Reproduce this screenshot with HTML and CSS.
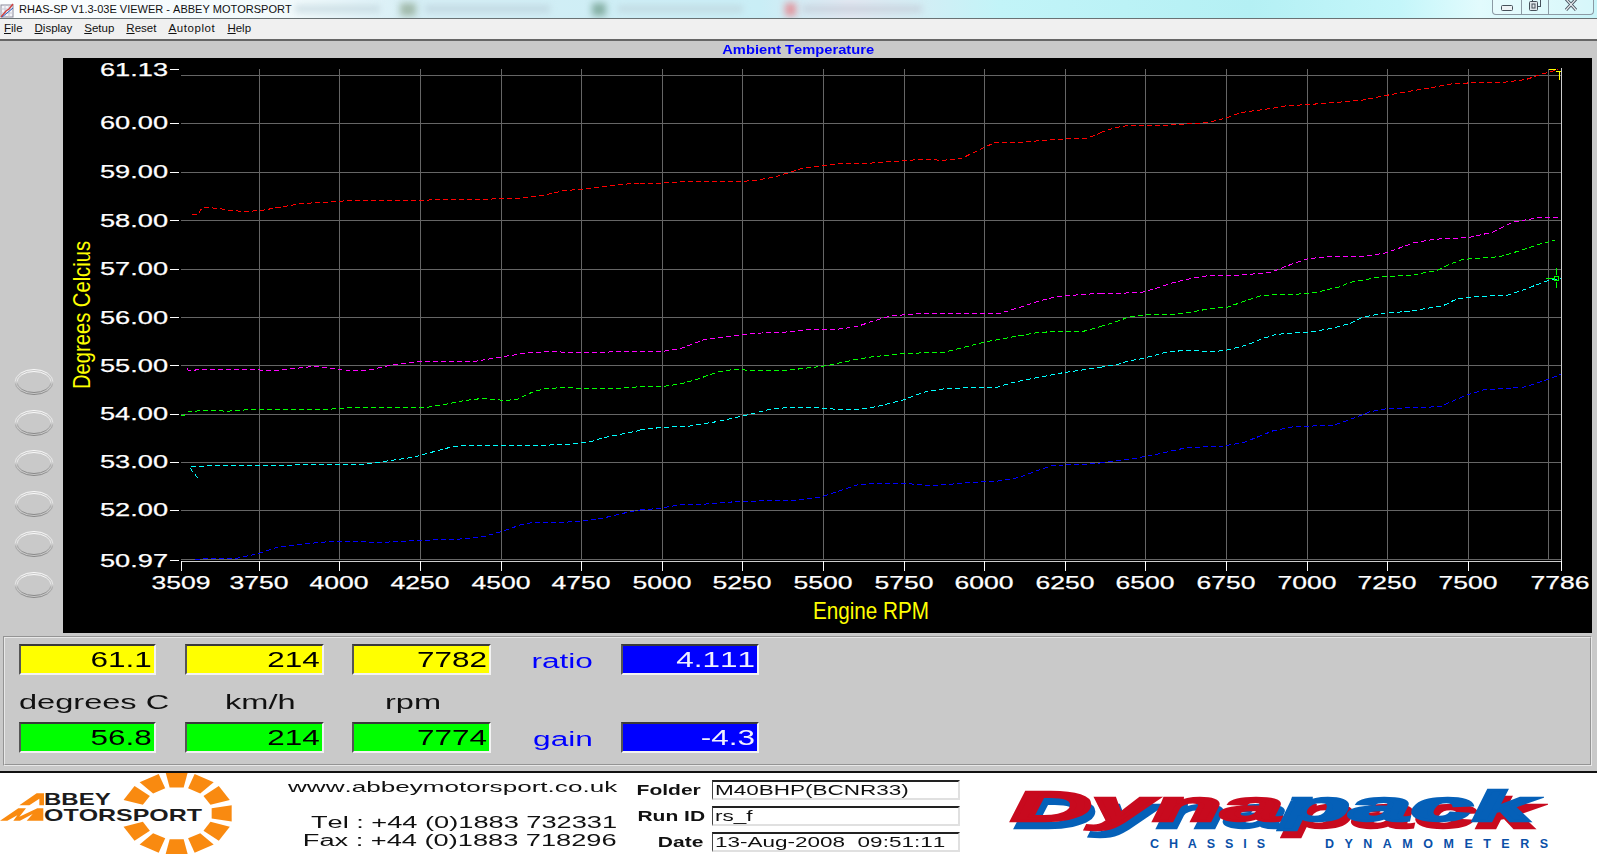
FILE: index.html
```html
<!DOCTYPE html>
<html lang="en">
<head>
<meta charset="utf-8">
<title>RHAS-SP V1.3-03E VIEWER - ABBEY MOTORSPORT</title>
<link rel="stylesheet" href="styles.css">
</head>
<body>
<header class="titlebar">
  <svg class="appicon" width="14" height="15" viewBox="0 0 14 15"><rect x="1" y="2" width="12" height="12" fill="#f4f4f8" stroke="#8a8a9a"/><path d="M1 6h12M1 10h12M5 2v12M9 2v12" stroke="#c8c8d4" fill="none"/><path d="M1 14L6 8l3-2 4-5" stroke="#d04040" stroke-width="1.4" fill="none"/><path d="M2 14l5-4 6-5" stroke="#3060c0" fill="none"/></svg>
  <span class="apptitle">RHAS-SP V1.3-03E VIEWER - ABBEY MOTORSPORT</span>
  <i class="blur b1"></i><i class="blur b2"></i><i class="blur b3"></i><i class="blur b4"></i><i class="blur b5"></i><i class="blur b6"></i><i class="blur b7"></i>
  <div class="winbtns">
    <div class="winbtn bmin"><svg width="12" height="6" viewBox="0 0 12 6"><rect x="0.5" y="0.5" width="11" height="5" rx="1" fill="#eef2f5" stroke="#46505a"/></svg></div>
    <div class="winbtn bmax"><svg width="12" height="12" viewBox="0 0 12 12"><rect x="3.5" y="-2.5" width="8" height="9" fill="none" stroke="#46505a"/><rect x="0.5" y="1.5" width="8" height="9" rx="1" fill="#dfe6ea" stroke="#46505a"/><rect x="3" y="4" width="3" height="4" fill="none" stroke="#46505a"/></svg></div>
    <div class="winbtn bclose"><svg width="12" height="11" viewBox="0 0 12 11"><path d="M1-1L11 10M11-1L1 10" stroke="#4a5560" stroke-width="3" fill="none"/><path d="M1-1L11 10M11-1L1 10" stroke="#e8edf0" stroke-width="1.2" fill="none"/></svg></div>
  </div>
</header>
<nav class="menubar">
  <span><u>F</u>ile</span><span><u>D</u>isplay</span><span><u>S</u>etup</span><span><u>R</u>eset</span><span class="autoplot"><u>A</u>utoplot</span><span><u>H</u>elp</span>
</nav>
<main class="main">
  <div class="charttitle"><span>Ambient Temperature</span></div>
  <div class="chartrow">
    <div class="radios">
      <svg class="radio" viewBox="0 0 40 26"><use href="#ring"/></svg>
      <svg class="radio" viewBox="0 0 40 26"><use href="#ring"/></svg>
      <svg class="radio" viewBox="0 0 40 26"><use href="#ring"/></svg>
      <svg class="radio" viewBox="0 0 40 26"><use href="#ring"/></svg>
      <svg class="radio" viewBox="0 0 40 26"><use href="#ring"/></svg>
      <svg class="radio" viewBox="0 0 40 26"><use href="#ring"/></svg>
    </div>
    <svg class="chart" width="1529" height="575" viewBox="63 58 1529 575">
      <defs>
        <linearGradient id="ringgrad" x1="0" y1="0" x2="0" y2="1"><stop offset="0" stop-color="#fff"/><stop offset="0.45" stop-color="#e8e8e8"/><stop offset="0.6" stop-color="#a8a8a8"/><stop offset="1" stop-color="#808080"/></linearGradient>
        <g id="ring"><ellipse cx="20" cy="13" rx="19" ry="12.5" fill="none" stroke="url(#ringgrad)" stroke-width=".9"/><ellipse cx="20" cy="13" rx="17" ry="10.5" fill="none" stroke="url(#ringgrad)" stroke-width=".9"/></g>
      </defs>
      <path class="grid" d="M259.5 69V559M339.5 69V559M420.5 69V559M501.5 69V559M581.5 69V559M662.5 69V559M742.5 69V559M823.5 69V559M904.5 69V559M984.5 69V559M1065.5 69V559M1145.5 69V559M1226.5 69V559M1307.5 69V559M1387.5 69V559M1468.5 69V559M1548.5 69V559M181 75.5H1561M181 123.5H1561M181 172.5H1561M181 220.5H1561M181 269.5H1561M181 317.5H1561M181 365.5H1561M181 414.5H1561M181 462.5H1561M181 510.5H1561M181 559.5H1561"/>
      <path class="axis" d="M1561.5 68V561M181 561.5H1562"/>
      <path class="ticks" d="M170 69.5H179M170 123.5H179M170 172.5H179M170 220.5H179M170 269.5H179M170 317.5H179M170 365.5H179M170 414.5H179M170 462.5H179M170 510.5H179M170 560.5H179M181.5 561V571M259.5 561V571M339.5 561V571M420.5 561V571M501.5 561V571M581.5 561V571M662.5 561V571M742.5 561V571M823.5 561V571M904.5 561V571M984.5 561V571M1065.5 561V571M1145.5 561V571M1226.5 561V571M1307.5 561V571M1387.5 561V571M1468.5 561V571M1561.5 561V571"/>

      <g transform="translate(170 170) scale(.33333)">
        <polyline class="tr red" points="65,133 85,133 95,115 110,112 150,116 175,120 225,125 275,121 340,110 400,100 470,97 530,92 690,92 780,90 1030,86 1070,83 1130,74 1180,62 1230,58 1320,48 1380,41 1410,40"/>
        <polyline class="tr mag" points="52,595 55,601 100,599 230,598 310,602 380,595 430,589 490,596 535,603 590,602 640,590 690,581 745,575 910,575 1000,560 1050,552 1090,547 1160,544 1180,547 1310,547 1330,544 1410,544"/>
        <polyline class="tr grn" points="33,735 40,738 55,726 100,721 140,721 170,724 205,721 260,718 480,718 500,715 560,713 770,712 820,704 880,692 940,685 1000,691 1040,689 1090,665 1125,656 1190,652 1240,656 1350,655 1410,650"/>
        <polyline class="tr cyn" points="85,925 75,914 65,902 60,889 105,888 230,886 375,885 580,883 650,873 730,862 780,848 840,832 890,826 1080,828 1140,825 1210,822 1270,813 1300,803 1350,793 1410,781"/>
        <polyline class="tr blu" points="75,1170 110,1165 200,1165 260,1152 320,1132 380,1125 450,1117 500,1114 640,1117 750,1111 860,1108 940,1100 1000,1083 1050,1065 1090,1057 1180,1057 1240,1053 1300,1044 1350,1032 1400,1021 1410,1020"/>
      </g>
      <g transform="translate(640 130) scale(.33333)">
        <polyline class="tr red" points="0,160 70,159 130,155 300,155 350,150 400,142 440,130 490,114 550,107 610,100 700,99 790,92 850,88 910,91 965,85 1000,68 1030,53 1065,38 1140,37 1200,32 1240,28 1340,25 1380,10"/>
        <polyline class="tr mag" points="0,664 70,664 120,656 150,645 190,630 260,620 340,610 440,606 500,599 590,598 650,590 700,573 750,558 850,550 1080,550 1130,535 1200,512 1250,500 1320,494 1380,490"/>
        <polyline class="tr grn" points="0,769 70,769 120,762 165,750 230,727 280,718 350,722 440,721 520,712 560,707 640,690 700,680 800,670 910,667 980,650 1040,635 1100,624 1190,608 1250,604 1330,604 1380,590"/>
        <polyline class="tr cyn" points="0,899 60,893 150,888 230,875 300,860 360,845 390,838 450,832 530,833 590,838 650,838 710,830 790,810 850,787 920,775 1070,772 1120,757 1180,745 1270,728 1380,712"/>
        <polyline class="tr blu" points="0,1140 60,1135 120,1124 200,1122 300,1114 460,1111 540,1102 600,1082 650,1065 700,1060 790,1060 880,1067 1000,1057 1075,1053 1140,1042 1190,1022 1240,1006 1330,1003 1380,999"/>
      </g>
      <g transform="translate(1100 60) scale(.33333)">
        <polyline class="tr red" points="0,218 30,208 60,200 90,196 190,196 260,192 320,188 355,180 385,172 420,158 510,146 560,137 620,134 700,128 790,120 860,106 940,92 1010,80 1065,70 1220,66 1280,58 1320,44 1375,28"/>
        <polyline class="tr mag" points="0,700 60,700 130,696 170,684 230,665 280,654 330,646 420,645 510,638 560,618 620,597 680,590 790,590 860,578 940,549 1000,538 1110,532 1180,516 1240,486 1300,476 1320,472 1375,472"/>
        <polyline class="tr grn" points="0,800 40,788 90,770 130,765 220,763 280,755 330,746 380,742 430,725 480,708 520,704 600,702 650,697 720,680 750,667 840,651 930,646 1010,632 1050,612 1090,598 1200,590 1260,572 1320,552 1365,541"/>
        <polyline class="tr cyn" points="0,922 50,914 80,904 130,895 200,876 260,871 340,875 380,870 440,855 490,835 530,823 640,815 700,804 750,790 790,771 860,758 920,755 980,745 1030,737 1070,717 1140,709 1220,706 1280,686 1340,663 1384,655"/>
        <polyline class="tr blu" points="0,1209 95,1197 160,1185 260,1163 370,1158 430,1148 520,1112 580,1100 700,1096 760,1075 810,1055 860,1046 1020,1040 1100,1005 1150,990 1270,982 1330,963 1384,943"/>
      </g>

      <path class="cur-y" d="M1549 69.5H1556M1556 71.5H1561M1559.5 71V80"/>
      <path class="cur-g" d="M1546 278.5H1554M1556.5 268V275M1556.5 282V288"/>
      <rect class="cur-g" x="1554.5" y="276.5" width="4" height="4"/>

      <g class="ylab">
        <text x="100" y="76" textLength="68" lengthAdjust="spacingAndGlyphs">61.13</text>
        <text x="100" y="129" textLength="68" lengthAdjust="spacingAndGlyphs">60.00</text>
        <text x="100" y="178" textLength="68" lengthAdjust="spacingAndGlyphs">59.00</text>
        <text x="100" y="227" textLength="68" lengthAdjust="spacingAndGlyphs">58.00</text>
        <text x="100" y="275" textLength="68" lengthAdjust="spacingAndGlyphs">57.00</text>
        <text x="100" y="324" textLength="68" lengthAdjust="spacingAndGlyphs">56.00</text>
        <text x="100" y="372" textLength="68" lengthAdjust="spacingAndGlyphs">55.00</text>
        <text x="100" y="420" textLength="68" lengthAdjust="spacingAndGlyphs">54.00</text>
        <text x="100" y="468" textLength="68" lengthAdjust="spacingAndGlyphs">53.00</text>
        <text x="100" y="516" textLength="68" lengthAdjust="spacingAndGlyphs">52.00</text>
        <text x="100" y="567" textLength="68" lengthAdjust="spacingAndGlyphs">50.97</text>
      </g>
      <g class="xlab">
        <text x="181" y="589" textLength="59" lengthAdjust="spacingAndGlyphs">3509</text>
        <text x="259" y="589" textLength="59" lengthAdjust="spacingAndGlyphs">3750</text>
        <text x="339" y="589" textLength="59" lengthAdjust="spacingAndGlyphs">4000</text>
        <text x="420" y="589" textLength="59" lengthAdjust="spacingAndGlyphs">4250</text>
        <text x="501" y="589" textLength="59" lengthAdjust="spacingAndGlyphs">4500</text>
        <text x="581" y="589" textLength="59" lengthAdjust="spacingAndGlyphs">4750</text>
        <text x="662" y="589" textLength="59" lengthAdjust="spacingAndGlyphs">5000</text>
        <text x="742" y="589" textLength="59" lengthAdjust="spacingAndGlyphs">5250</text>
        <text x="823" y="589" textLength="59" lengthAdjust="spacingAndGlyphs">5500</text>
        <text x="904" y="589" textLength="59" lengthAdjust="spacingAndGlyphs">5750</text>
        <text x="984" y="589" textLength="59" lengthAdjust="spacingAndGlyphs">6000</text>
        <text x="1065" y="589" textLength="59" lengthAdjust="spacingAndGlyphs">6250</text>
        <text x="1145" y="589" textLength="59" lengthAdjust="spacingAndGlyphs">6500</text>
        <text x="1226" y="589" textLength="59" lengthAdjust="spacingAndGlyphs">6750</text>
        <text x="1307" y="589" textLength="59" lengthAdjust="spacingAndGlyphs">7000</text>
        <text x="1387" y="589" textLength="59" lengthAdjust="spacingAndGlyphs">7250</text>
        <text x="1468" y="589" textLength="59" lengthAdjust="spacingAndGlyphs">7500</text>
        <text x="1560" y="589" textLength="59" lengthAdjust="spacingAndGlyphs">7786</text>
      </g>
      <text class="axtitle" transform="translate(90 389) rotate(-90)" textLength="148" lengthAdjust="spacingAndGlyphs">Degrees Celcius</text>
      <text class="axtitle" x="813" y="619" textLength="116" lengthAdjust="spacingAndGlyphs">Engine RPM</text>
    </svg>
  </div>
  <section class="panel">
    <div class="box yellow"><span>61.1</span></div>
    <div class="box yellow"><span>214</span></div>
    <div class="box yellow"><span>7782</span></div>
    <div class="side"><span>ratio</span></div>
    <div class="box blue"><span>4.111</span></div>
    <div class="unit"><span>degrees C</span></div>
    <div class="unit kmh"><span>km/h</span></div>
    <div class="unit rpm"><span>rpm</span></div>
    <div class="spacer"></div>
    <div class="box green"><span>56.8</span></div>
    <div class="box green"><span>214</span></div>
    <div class="box green"><span>7774</span></div>
    <div class="side gain"><span>gain</span></div>
    <div class="box blue"><span>-4.3</span></div>
  </section>
</main>
<footer class="footer">
  <svg class="abbey" width="260" height="81" viewBox="0 9 780 243">
    <defs><polygon id="ray" points="105,-21 165,-33 165,33 105,21"/></defs>
    <g class="orange" transform="translate(530 130) scale(1 .74)">
      <use href="#ray" transform="rotate(-90)"/><use href="#ray" transform="rotate(-60)"/><use href="#ray" transform="rotate(-30)"/><use href="#ray"/><use href="#ray" transform="rotate(30)"/><use href="#ray" transform="rotate(60)"/><use href="#ray" transform="rotate(90)"/><use href="#ray" transform="rotate(120)"/><use href="#ray" transform="rotate(150)"/><use href="#ray" transform="rotate(210)"/><use href="#ray" transform="rotate(240)"/>
    </g>
    <path class="orange" d="M58 106L110 70H132V106H118V86L88 106ZM0 152L55 115H78L58 140L112 115H130V152H80L98 132L60 152H40L52 136L22 152Z"/>
    <text class="abbeytxt" x="132" y="106" textLength="200" lengthAdjust="spacingAndGlyphs">BBEY</text>
    <text class="abbeytxt" x="132" y="152" textLength="474" lengthAdjust="spacingAndGlyphs">OTORSPORT</text>
  </svg>
  <div class="contact">
    <div class="web"><span>www.abbeymotorsport.co.uk</span></div>
    <div class="tel"><span>Tel : +44 (0)1883 732331</span></div>
    <div class="fax"><span>Fax : +44 (0)1883 718296</span></div>
  </div>
  <div class="runinfo">
    <div class="lbl lbl-folder"><span>Folder</span></div><div class="field"><span>M40BHP(BCNR33)</span></div>
    <div class="lbl"><span>Run ID</span></div><div class="field"><span>rs_f</span></div>
    <div class="lbl lbl-date"><span>Date</span></div><div class="field"><span>13-Aug-2008&nbsp;&nbsp;09:51:11</span></div>
  </div>
  <svg class="dynapack" width="637" height="81" viewBox="960 773 637 81">
    <text class="dyn fill-r" x="1011" y="821" textLength="272" lengthAdjust="spacingAndGlyphs">Dyna</text>
    <text class="dyn fill-b" x="1282" y="821" textLength="252" lengthAdjust="spacingAndGlyphs">pack</text>
    <text class="dyncap" x="1150" y="848" textLength="115">CHASSIS</text>
    <text class="dyncap" x="1325" y="848" textLength="223">DYNAMOMETERS</text>
  </svg>
</footer>
</body>
</html>
```
FILE: styles.css
```css
* { box-sizing: border-box; }
html, body { margin: 0; padding: 0; }
body {
  width: 1597px;
  height: 854px;
  overflow: hidden;
  background: #fff;
  font-family: "Liberation Sans", Arial, sans-serif;
  font-kerning: none;
  color: #000;
}

/* window chrome */
.titlebar {
  position: relative;
  height: 19px;
  display: flex;
  align-items: center;
  gap: 5px;
  padding-left: 0;
  border-bottom: 1px solid #6a7274;
  overflow: hidden;
  background: linear-gradient(90deg, #fbfdfe 0, #f2fafc 290px, #d5eef5 420px, #c9eef6 760px, #e2e8f2 850px, #c2f4f8 1000px, #b4f0f4 1250px, #c4f6fa 1400px, #e2fbfd 1480px, #c8f4f8 1597px);
}
.appicon { flex: none; margin-top: 2px; }
.apptitle { font-size: 11px; white-space: nowrap; color: #111; position: relative; z-index: 1; }
.blur { position: absolute; display: block; filter: blur(3.5px); opacity: .75; }
.b1 { left: 295px; top: 6px; width: 85px; height: 6px; background: #bcd0d8; }
.b2 { left: 400px; top: 3px; width: 16px; height: 13px; background: #8fa892; }
.b3 { left: 425px; top: 6px; width: 125px; height: 6px; background: #b8ccd6; }
.b4 { left: 592px; top: 3px; width: 14px; height: 13px; background: #6c9a88; }
.b5 { left: 618px; top: 6px; width: 125px; height: 6px; background: #bcd0d8; }
.b6 { left: 785px; top: 3px; width: 11px; height: 13px; background: #e87880; }
.b7 { left: 802px; top: 6px; width: 120px; height: 6px; background: #c0c6d2; }
.winbtns {
  position: absolute;
  right: 3px;
  top: 0;
  width: 102px;
  height: 15px;
  display: flex;
  border: 1px solid #8b9aa4;
  border-top: 0;
  border-radius: 0 0 4px 4px;
  background: rgba(255, 255, 255, .25);
}
.winbtn { display: flex; justify-content: center; align-items: flex-start; }
.winbtn + .winbtn { border-left: 1px solid #8b9aa4; }
.bmin { width: 28px; padding-top: 5px; }
.bmax { width: 27px; }
.bclose { flex: 1; }

.menubar {
  height: 22px;
  display: flex;
  gap: 12px;
  padding: 2px 0 0 4px;
  background: #f0f0f0;
  border-bottom: 2px solid #666;
  font-size: 11.5px;
  line-height: 14px;
  color: #111;
}
.autoplot { letter-spacing: .6px; }

/* main */
.main { background: #c9c9c9; padding-bottom: 5px; }
.charttitle {
  height: 17px;
  display: flex;
  justify-content: center;
  align-items: center;
  padding-left: 0;
  font-size: 13px;
  font-weight: bold;
  color: #0000ff;
}
.charttitle span { display: inline-block; transform: scaleX(1.13); }
.chartrow { display: flex; height: 578px; }
.radios {
  width: 63px;
  flex: none;
  padding: 311px 0 0 14px;
  display: flex;
  flex-direction: column;
  gap: 14.6px;
}
.radio { width: 40px; height: 26px; display: block; overflow: visible; }
.chart { display: block; flex: none; background: #000; }

.grid { stroke: #666; stroke-width: 1; fill: none; shape-rendering: crispEdges; }
.axis { stroke: #ccc; stroke-width: 1; fill: none; shape-rendering: crispEdges; }
.ticks { stroke: #fff; stroke-width: 1; fill: none; shape-rendering: crispEdges; }
.tr {
  fill: none;
  stroke-width: 1;
  stroke-dasharray: 5 3;
  vector-effect: non-scaling-stroke;
  shape-rendering: crispEdges;
}
.red { stroke: #ff0000; }
.mag { stroke: #ff00ff; }
.grn { stroke: #00ff00; }
.cyn { stroke: #00ffff; }
.blu { stroke: #0000ff; }
.cur-y { stroke: #ffff00; fill: none; shape-rendering: crispEdges; }
.cur-g { stroke: #00ff00; fill: none; shape-rendering: crispEdges; }
.ylab text, .xlab text {
  fill: #fff;
  stroke: #fff;
  stroke-width: .25;
  font-size: 18.5px;
  font-family: "Liberation Sans", Arial, sans-serif;
}
.xlab text { text-anchor: middle; }
.axtitle { fill: #ffff00; font-size: 24px; font-family: "Liberation Sans", Arial, sans-serif; }

/* readout panel */
.panel {
  height: 130px;
  margin: 0 5px 0 3px;
  padding: 6px 0 0 14px;
  border: 2px groove #e8e8e8;
  display: grid;
  grid-template-columns: 137px 139px 139px 73px 138px;
  grid-template-rows: 31px 47px 31px;
  column-gap: 28.5px;
}
.box {
  display: flex;
  justify-content: flex-end;
  align-items: center;
  padding-right: 2px;
  border-style: solid;
  border-width: 2px;
  border-color: #3a3a3a #f2f2f2 #f2f2f2 #555;
  font-size: 22px;
  line-height: 24px;
  overflow: visible;
}
.box span { display: inline-block; transform: scaleX(1.43); transform-origin: right center; }
.yellow { background: #ffff00; }
.green { background: #00ff00; }
.blue { background: #0000ff; color: #f0f0ff; }
.side {
  color: #0000ff;
  font-size: 20px;
  display: flex;
  justify-content: flex-end;
  align-items: flex-end;
  padding-bottom: 2px;
}
.side span { display: inline-block; transform: scaleX(1.58); transform-origin: right center; }
.gain { padding-bottom: 2px; }
.spacer { grid-column: span 2; }
.unit { font-size: 21px; line-height: 24px; padding-top: 15px; white-space: nowrap; color: #111; }
.unit span { display: inline-block; transform: scaleX(1.55); transform-origin: left center; }
.kmh { padding-left: 40px; }
.rpm { padding-left: 33px; }

/* footer */
.footer {
  height: 83px;
  display: flex;
  border-top: 2px solid #111;
  background: #fff;
}
.abbey { flex: none; display: block; }
.orange { fill: #f98a10; }
.abbeytxt { fill: #1c1c1c; font-size: 50px; font-weight: bold; font-family: "Liberation Sans", Arial, sans-serif; }
.contact {
  width: 357px;
  flex: none;
  text-align: right;
  font-size: 16px;
  line-height: 18px;
  color: #111;
}
.contact span { display: inline-block; transform: scaleX(1.7); transform-origin: right center; white-space: nowrap; }
.web { font-size: 15px; padding-top: 5px; }
.web span { transform: scaleX(1.74); }
.tel { padding-top: 18px; }
.runinfo {
  width: 343px;
  flex: none;
  padding-top: 7px;
  display: grid;
  grid-template-columns: 88px 248px;
  grid-template-rows: 20px 20px 20px;
  column-gap: 7px;
  row-gap: 6px;
}
.lbl {
  font-size: 14px;
  font-weight: bold;
  text-align: right;
  line-height: 20px;
  color: #111;
}
.lbl-folder { padding-right: 4px; }
.lbl-date { padding-right: 2px; }
.lbl span { display: inline-block; transform: scaleX(1.5); transform-origin: right center; }
.field {
  border-style: solid;
  border-width: 2px 2px 2px 1px;
  border-color: #222 #e0e0e0 #e0e0e0 #444;
  font-size: 15px;
  line-height: 16px;
  padding-left: 2px;
  white-space: nowrap;
  color: #111;
}
.field span { display: inline-block; transform: scaleX(1.5); transform-origin: left center; }
.dynapack { flex: none; display: block; }
.dyn {
  font-size: 42px;
  font-weight: bold;
  font-style: italic;
  font-family: "Liberation Sans", Arial, sans-serif;
  stroke-width: 2.4;
}
.fill-b { fill: #0560b8; stroke: #0560b8; filter: drop-shadow(4px 7px 0 #c80a1e); }
.fill-r { fill: #c80a1e; stroke: #c80a1e; filter: drop-shadow(4px 7px 0 #0560b8); }
.dyncap { fill: #0a50a8; font-size: 12.5px; font-weight: bold; font-family: "Liberation Sans", Arial, sans-serif; }
```
